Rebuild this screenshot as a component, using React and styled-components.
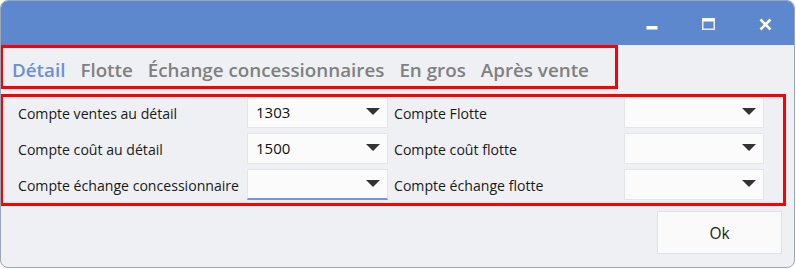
import React from "react";
import styled, { createGlobalStyle } from "styled-components";

const Global = createGlobalStyle`
  html, body { margin: 0; padding: 0; background: #ffffff; }
  body { font-family: "Open Sans", "Noto Sans", sans-serif; }
  * { box-sizing: border-box; }
`;

const Window = styled.div`
  width: 795px;
  height: 268px;
  border: 1px solid #9ba6b4;
  border-radius: 8px;
  overflow: hidden;
  background: #eef0f4;
  display: flex;
  flex-direction: column;
`;

const TitleBar = styled.div`
  height: 44px;
  flex: none;
  background: #5e88ce;
  display: flex;
  justify-content: flex-end;
  align-items: stretch;
  padding-top: 2px;
`;

const CaptionButton = styled.div`
  width: 57px;
  display: flex;
  align-items: center;
  justify-content: center;
`;

const TabBar = styled.div`
  width: 618px;
  height: 44px;
  margin-left: -1px;
  border: 3px solid #ff0000;
  display: flex;
  align-items: center;
  gap: 15px;
  padding: 5px 0 0 9px;
`;

const Tab = styled.span`
  font-size: 18.8px;
  font-weight: 600;
  color: ${(p) => (p.$active ? "#6c8fd5" : "#808080")};
`;

const Form = styled.div`
  width: 786px;
  margin: 5px 0 0 -1px;
  border: 3px solid #ff0000;
  display: grid;
  grid-template-columns: 229px 141px 236px 140px;
  grid-auto-rows: 31px;
  row-gap: 5px;
  padding: 0 18px 3px 15px;
`;

const Label = styled.div`
  font-size: 14.1px;
  color: #1a1a1a;
  display: flex;
  align-items: center;
  padding-top: 2px;
  padding-left: ${(p) => (p.$second ? "6px" : "0")};
  white-space: nowrap;
`;

const Combo = styled.div`
  position: relative;
  background: #fbfbfb;
  border: 1px solid #e4e5e8;
  border-bottom: ${(p) => (p.$focused ? "2px solid #7396d8" : "1px solid #e4e5e8")};
  display: flex;
  align-items: center;
  padding: 0 0 2px 8px;
  font-size: 15px;
  color: #111;
`;

const Arrow = styled.span`
  position: absolute;
  right: 7px;
  top: 10px;
  width: 0;
  height: 0;
  border-left: 7px solid transparent;
  border-right: 7px solid transparent;
  border-top: 7px solid #333333;
`;

const Footer = styled.div`
  display: flex;
  justify-content: flex-end;
  padding: 5px 12px 0 0;
`;

const OkButton = styled.button`
  width: 125px;
  height: 43px;
  background: #fafafa;
  border: 1px solid #e0e1e4;
  font-family: "Open Sans", "Noto Sans", sans-serif;
  font-size: 15.5px;
  color: #1a1a1a;
  padding: 0;
`;

const rows = [
  ["Compte ventes au détail", "1303", "Compte Flotte", ""],
  ["Compte coût au détail", "1500", "Compte coût flotte", ""],
  ["Compte échange concessionnaire", "", "Compte échange flotte", ""],
];

export default function App() {
  return (
    <>
      <Global />
      <Window>
        <TitleBar>
          <CaptionButton>
            <svg width="12" height="12" viewBox="0 0 12 12">
              <rect x="0.5" y="8" width="11" height="3.5" fill="#fff" />
            </svg>
          </CaptionButton>
          <CaptionButton>
            <svg width="13" height="12" viewBox="0 0 13 12">
              <rect x="0.75" y="0.75" width="11.5" height="10.5" fill="none" stroke="#e8eefa" strokeWidth="1.5" />
              <rect x="0.5" y="0.5" width="12" height="3" fill="#fff" />
            </svg>
          </CaptionButton>
          <CaptionButton>
            <svg width="13" height="13" viewBox="0 0 13 13">
              <path d="M1.5 1.5 L11.5 11.5 M11.5 1.5 L1.5 11.5" stroke="#fff" strokeWidth="2.6" />
            </svg>
          </CaptionButton>
        </TitleBar>
        <TabBar>
          <Tab $active>Détail</Tab>
          <Tab>Flotte</Tab>
          <Tab>Échange concessionnaires</Tab>
          <Tab>En gros</Tab>
          <Tab>Après vente</Tab>
        </TabBar>
        <Form>
          {rows.map((r, i) => (
            <React.Fragment key={i}>
              <Label>{r[0]}</Label>
              <Combo $focused={i === 2}>
                {r[1]}
                <Arrow />
              </Combo>
              <Label $second>{r[2]}</Label>
              <Combo>
                {r[3]}
                <Arrow />
              </Combo>
            </React.Fragment>
          ))}
        </Form>
        <Footer>
          <OkButton>Ok</OkButton>
        </Footer>
      </Window>
    </>
  );
}
